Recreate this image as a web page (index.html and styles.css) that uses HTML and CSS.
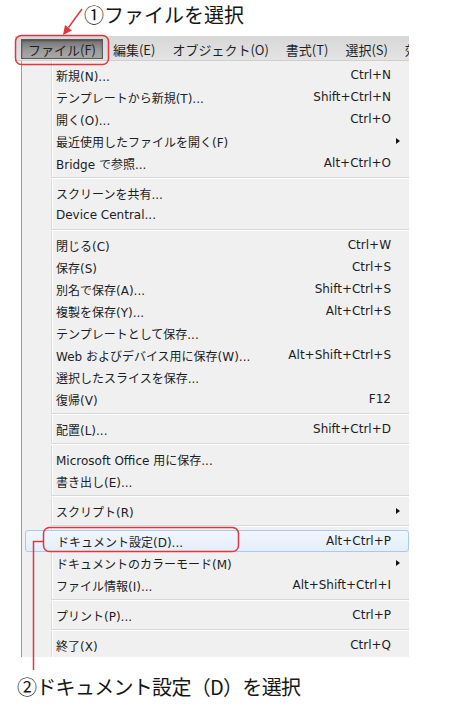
FILE: index.html
```html
<!DOCTYPE html>
<html lang="ja">
<head>
<meta charset="utf-8">
<link rel="stylesheet" href="styles.css">
</head>
<body>
<div class="page">
  <div class="note note-top">①ファイルを選択</div>
  <div class="menubar">
    <span class="mb-item active">ファイル(F)</span>
    <span class="mb-item">編集(E)</span>
    <span class="mb-item">オブジェクト(O)</span>
    <span class="mb-item">書式(T)</span>
    <span class="mb-item">選択(S)</span>
    <span class="mb-item">効果(C)</span>
  </div>
  <div class="menu">
    <div class="row"><span>新規(N)...</span><span class="sc">Ctrl+N</span><span></span></div>
    <div class="row"><span>テンプレートから新規(T)...</span><span class="sc">Shift+Ctrl+N</span><span></span></div>
    <div class="row"><span>開く(O)...</span><span class="sc">Ctrl+O</span><span></span></div>
    <div class="row"><span>最近使用したファイルを開く(F)</span><span class="sc"></span><span class="sub"></span></div>
    <div class="row"><span>Bridge で参照...</span><span class="sc">Alt+Ctrl+O</span><span></span></div>
    <div class="sep"></div>
    <div class="row"><span>スクリーンを共有...</span><span class="sc"></span><span></span></div>
    <div class="row"><span>Device Central...</span><span class="sc"></span><span></span></div>
    <div class="sep"></div>
    <div class="row"><span>閉じる(C)</span><span class="sc">Ctrl+W</span><span></span></div>
    <div class="row"><span>保存(S)</span><span class="sc">Ctrl+S</span><span></span></div>
    <div class="row"><span>別名で保存(A)...</span><span class="sc">Shift+Ctrl+S</span><span></span></div>
    <div class="row"><span>複製を保存(Y)...</span><span class="sc">Alt+Ctrl+S</span><span></span></div>
    <div class="row"><span>テンプレートとして保存...</span><span class="sc"></span><span></span></div>
    <div class="row"><span>Web およびデバイス用に保存(W)...</span><span class="sc">Alt+Shift+Ctrl+S</span><span></span></div>
    <div class="row"><span>選択したスライスを保存...</span><span class="sc"></span><span></span></div>
    <div class="row"><span>復帰(V)</span><span class="sc">F12</span><span></span></div>
    <div class="sep"></div>
    <div class="row"><span>配置(L)...</span><span class="sc">Shift+Ctrl+D</span><span></span></div>
    <div class="sep"></div>
    <div class="row"><span>Microsoft Office 用に保存...</span><span class="sc"></span><span></span></div>
    <div class="row"><span>書き出し(E)...</span><span class="sc"></span><span></span></div>
    <div class="sep"></div>
    <div class="row"><span>スクリプト(R)</span><span class="sc"></span><span class="sub"></span></div>
    <div class="sep"></div>
    <div class="row hl"><span>ドキュメント設定(D)...</span><span class="sc">Alt+Ctrl+P</span><span></span></div>
    <div class="row"><span>ドキュメントのカラーモード(M)</span><span class="sc"></span><span class="sub"></span></div>
    <div class="row"><span>ファイル情報(I)...</span><span class="sc">Alt+Shift+Ctrl+I</span><span></span></div>
    <div class="sep"></div>
    <div class="row"><span>プリント(P)...</span><span class="sc">Ctrl+P</span><span></span></div>
    <div class="sep"></div>
    <div class="row"><span>終了(X)</span><span class="sc">Ctrl+Q</span><span></span></div>
  </div>
  <div class="note note-bottom">②ドキュメント設定（D）を選択</div>

  <svg class="marks" width="450" height="708" viewBox="0 0 450 708">
    <g fill="none" stroke="#e2363f" stroke-width="1.5">
      <rect x="15.5" y="35.5" width="93" height="29" rx="6"/>
      <line x1="82" y1="9" x2="68.5" y2="27.5"/>
      <rect x="43.5" y="527.5" width="195" height="24" rx="6"/>
      <polyline points="43,541.5 33.5,541.5 33.5,670"/>
    </g>
    <polygon points="63,35 72,30.5 65,25" fill="#e2363f"/>
  </svg>
</div>
</body>
</html>
```
FILE: styles.css
```css
html, body {
  margin: 0;
  padding: 0;
  background: #ffffff;
}

.page {
  position: relative;
  width: 450px;
  height: 708px;
  overflow: hidden;
  font-family: "Noto Sans CJK JP", "Noto Sans", sans-serif;
}

.note {
  font-size: 20px;
  color: #161616;
  white-space: nowrap;
}

.note-top {
  height: 36px;
  line-height: 29px;
  padding-left: 84px;
  box-sizing: border-box;
}

.note-bottom {
  padding: 18px 0 0 17px;
  line-height: 24px;
  letter-spacing: -0.7px;
}

.menubar {
  margin-left: 15px;
  width: 394px;
  height: 25px;
  box-sizing: border-box;
  padding: 3px 0 1px 6px;
  display: flex;
  gap: 3px;
  overflow: hidden;
  white-space: nowrap;
  background: linear-gradient(#d7d7d7, #e3e3e3);
  border-bottom: 1px solid #cfcfcf;
}

.mb-item {
  display: flex;
  align-items: center;
  padding: 0 7px;
  font-size: 13px;
  color: #1f1f28;
  flex: none;
}

.mb-item.active {
  background: linear-gradient(#727272, #9c9c9c 60%, #a8a8a8);
  border: 1px solid #5a5a5a;
  box-shadow: inset 0 1px 2px rgba(0,0,0,0.35);
  padding: 0 6px;
}

.menu {
  margin-left: 21px;
  width: 388px;
  box-sizing: border-box;
  border-left: 1px solid #9a9a9a;
  padding: 3px 0 1px 0;
  background:
    linear-gradient(to right, transparent 29px, #dcdcdc 29px, #dcdcdc 30px, #ffffff 30px, #ffffff 31px, transparent 31px),
    #f0f0f0;
  font-family: "DejaVu Sans", "Noto Sans CJK JP", sans-serif;
  font-size: 12px;
  color: #1c1c26;
}

.row {
  height: 22px;
  box-sizing: border-box;
  display: grid;
  grid-template-columns: 1fr auto 10px;
  align-items: center;
  padding: 0 8px 0 34px;
  white-space: nowrap;
}

.sc {
  text-align: right;
}

.sub {
  justify-self: end;
  width: 0;
  height: 0;
  margin-right: 1px;
  border-left: 4px solid #111;
  border-top: 3.5px solid transparent;
  border-bottom: 3.5px solid transparent;
}

.row.hl {
  margin-left: 3px;
  padding-left: 31px;
  border: 1px solid #a9c9ee;
  border-radius: 3px;
  background: linear-gradient(#f1f6fd, #e3eefb);
  padding-right: 7px;
}

.sep {
  height: 8px;
  margin-left: 29px;
  box-sizing: border-box;
  padding-top: 3px;
}

.sep::before {
  content: "";
  display: block;
  height: 1px;
  background: #d8d8d8;
  border-bottom: 1px solid #ffffff;
}

.marks {
  position: absolute;
  top: 0;
  left: 0;
  pointer-events: none;
}
```
